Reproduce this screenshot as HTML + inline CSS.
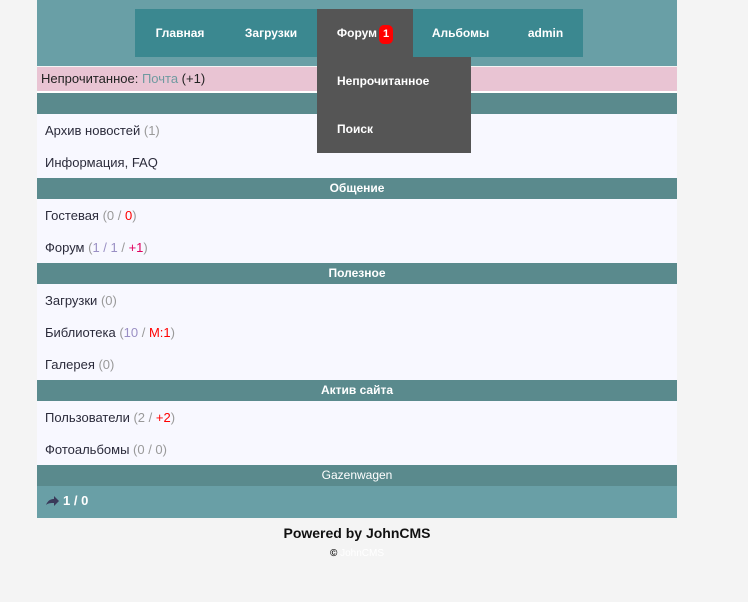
<!DOCTYPE html>
<html><head><meta charset="utf-8"><style>
*{margin:0;padding:0;box-sizing:border-box}
body{width:748px;height:602px;background:#f4f4f4;font-family:"Liberation Sans",Arial,sans-serif;font-size:13px;position:relative;overflow:hidden}
#wrap{position:absolute;left:37px;top:0;width:640px}
#head{height:66px;background:#699fa6;position:relative}
#nav{position:absolute;left:98px;top:9px;width:448px;height:48px;background:#3b8890;display:flex}
#nav div{color:#fff;font-weight:bold;font-size:12px;line-height:48px;text-align:center}
.badge{display:inline-block;background:#f00;color:#fff;border-radius:5px;font-size:11px;line-height:19px;width:14px;text-align:center;vertical-align:0px;margin-left:2px}
#dd{position:absolute;left:317px;top:57px;width:154px;height:96px;background:#555;z-index:5}
#dd div{color:#fff;font-weight:bold;font-size:12px;height:48px;line-height:48px;padding-left:20px}
.pink{margin-top:1px;height:26px;background:#e9c4d3;line-height:24px;padding-left:4px;color:#222;font-size:13px;border-bottom:2px solid #fff}
.h{height:21px;background:#5a8a8d;color:#fff;font-weight:bold;font-size:12px;text-align:center;line-height:21px}
.r{height:32px;background:#f8f8ff;line-height:34px;padding-left:8px;color:#2b2b3b}
.g{color:#999}.red{color:#f00}.pk{color:#e0005e}.pu{color:#9a8fc4}
#fb{height:32px;background:#699fa6;color:#fff;font-weight:bold;line-height:30px;padding-left:8px}
</style></head><body>
<div id="wrap">
<div id="head"><div id="nav">
<div style="width:90px">Главная</div>
<div style="width:92px">Загрузки</div>
<div style="width:96px;background:#555">Форум<span class="badge">1</span></div>
<div style="width:95px">Альбомы</div>
<div style="width:75px">admin</div>
</div></div>
<div class="pink">Непрочитанное: <span style="color:#6f9aa0">Почта</span> (+1)</div>
<div class="h"></div>
<div class="r">Архив новостей <span class="g">(1)</span></div>
<div class="r">Информация, FAQ</div>
<div class="h">Общение</div>
<div class="r">Гостевая <span class="g">(0 / <span class="red">0</span>)</span></div>
<div class="r">Форум <span class="g">(<span class="pu">1 / 1</span> / <span class="pk">+1</span>)</span></div>
<div class="h">Полезное</div>
<div class="r">Загрузки <span class="g">(0)</span></div>
<div class="r">Библиотека <span class="g">(<span class="pu">10</span> / <span class="red">М:1</span>)</span></div>
<div class="r">Галерея <span class="g">(0)</span></div>
<div class="h">Актив сайта</div>
<div class="r">Пользователи <span class="g">(2 / <span class="red">+2</span>)</span></div>
<div class="r">Фотоальбомы <span class="g">(0 / 0)</span></div>
<div class="h" style="font-weight:normal">Gazenwagen</div>
<div id="fb"><svg width="14" height="10" viewBox="0 0 14 10" style="vertical-align:-1px;margin-right:4px"><path d="M1 9 C3 4 6 3 9 3 L9 0 L14 5 L9 10 L9 7 C6 7 3 7 1 9Z" fill="#3a3a5a"/></svg>1 / 0</div>
<div style="text-align:center;font-weight:bold;font-size:14px;color:#111;margin-top:7px">Powered by JohnCMS</div>
<div style="text-align:center;font-size:10px;margin-top:7px;font-weight:bold"><span style="color:#111">©</span> <span style="color:#fff;font-weight:normal">JohnCMS</span></div>
</div>
<div id="dd"><div>Непрочитанное</div><div>Поиск</div></div>
</body></html>
